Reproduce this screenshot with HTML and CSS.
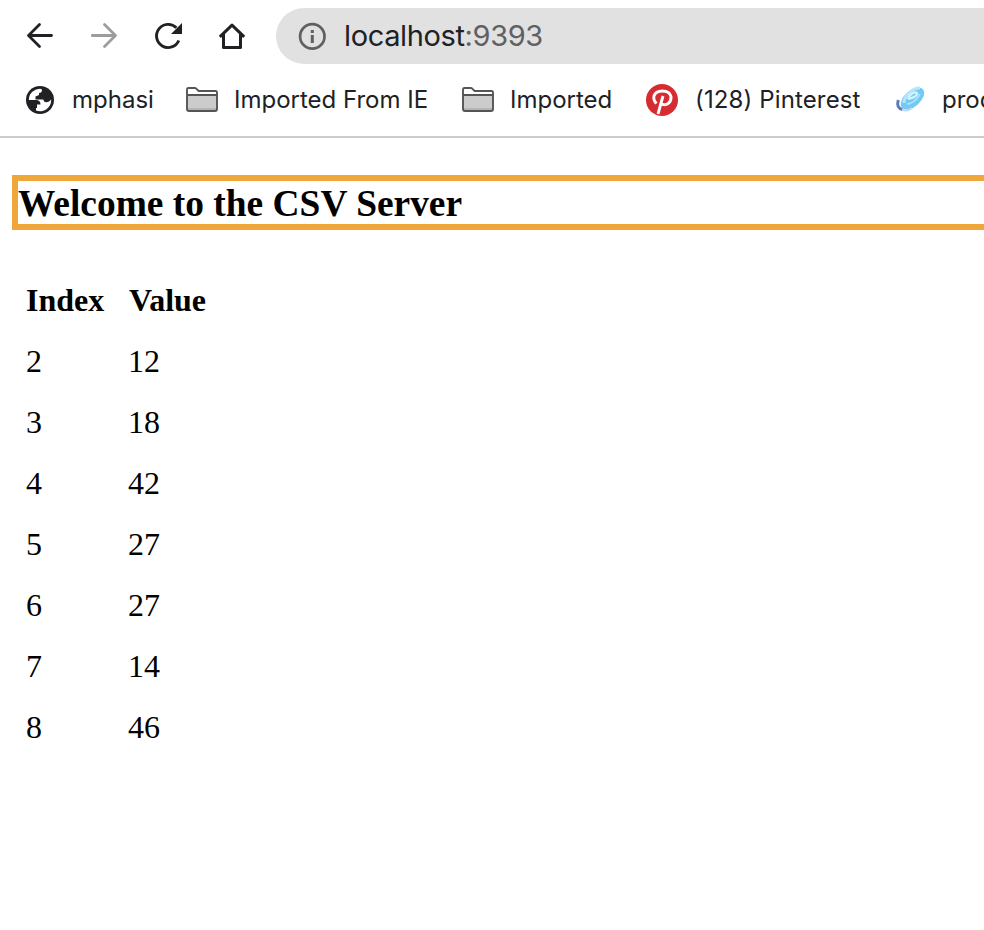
FILE: index.html
```html
<!DOCTYPE html>
<html lang="en">
<head>
<meta charset="utf-8">
<title>CSV Server</title>
<link rel="stylesheet" href="styles.css">
</head>
<body>
<header class="browser">
  <div class="toolbar">
    <svg class="nav" viewBox="0 0 32 32"><path d="M27.500 15.500H5M15.500 4.500 4.500 15.500 15.500 26.500" fill="none" stroke="#202124" stroke-width="2.800" stroke-linecap="round" stroke-linejoin="round"/></svg>
    <svg class="nav" viewBox="0 0 32 32"><path d="M4.300 15.500H27M16.500 4.500 27.500 15.500 16.500 26.500" fill="none" stroke="#9c9c9c" stroke-width="2.800" stroke-linecap="round" stroke-linejoin="round"/></svg>
    <svg class="nav" viewBox="0 0 32 32"><path d="M26.800 20.500A11.600 11.600 0 1 1 24.400 7.800" fill="none" stroke="#202124" stroke-width="2.900"/><path d="M30 3v11H19z" fill="#202124"/></svg>
    <svg class="nav" viewBox="0 0 32 32"><path d="M3.800 16.800 16 5.200 28.200 16.800M7.500 14V27.500H24.500V14" fill="none" stroke="#202124" stroke-width="3" stroke-linejoin="round"/></svg>
    <div class="address">
      <svg class="info" viewBox="0 0 28 28"><circle cx="14.300" cy="14.400" r="12.200" fill="none" stroke="#5f6064" stroke-width="2.700"/><path d="M12.800 13h3v8h-3zM12.800 8h3v2.900h-3z" fill="#5f6064"/></svg>
      <span class="host">localhost<span class="port">:9393</span></span>
    </div>
  </div>
  <nav class="bookmarks">
    <a class="bookmark globe">
      <svg class="icon" viewBox="0 0 32 32"><circle cx="16" cy="16" r="14" fill="#202124"/><path d="M17.500 4.900A11.200 11.200 0 0 0 4.800 16H12Q16.500 16 16.500 20.500H13V24H12V26.500A11.200 11.200 0 0 0 27.200 15.600Q25 18.500 22 18.200 19.500 18 19.300 15.500H11.500V12.500L15 11V9Q17.500 9 18 7z" fill="#fff"/></svg>
      <span>mphasi</span></a>
    <a class="bookmark folder-ie">
      <svg class="icon" viewBox="0 0 32 32"><path d="M1 25V5.500Q1 4 2.500 4H9q1 0 2 1.300L12.700 7H29.500Q31 7 31 8.500V25q0 2-2 2H3q-2 0-2-2z" fill="#fff"/><path d="M1 11H31V26H1z" fill="#ccc"/><path d="M2 24H30v2H2z" fill="#b5b5b5"/><path d="M1 11H31M1 25V5.500Q1 4 2.500 4H9q1 0 2 1.300L12.700 7H29.500Q31 7 31 8.500V25q0 2-2 2H3q-2 0-2-2z" fill="none" stroke="#555" stroke-width="1.900"/></svg>
      <span>Imported From IE</span></a>
    <a class="bookmark folder">
      <svg class="icon" viewBox="0 0 32 32"><path d="M1 25V5.500Q1 4 2.500 4H9q1 0 2 1.300L12.700 7H29.500Q31 7 31 8.500V25q0 2-2 2H3q-2 0-2-2z" fill="#fff"/><path d="M1 11H31V26H1z" fill="#ccc"/><path d="M2 24H30v2H2z" fill="#b5b5b5"/><path d="M1 11H31M1 25V5.500Q1 4 2.500 4H9q1 0 2 1.300L12.700 7H29.500Q31 7 31 8.500V25q0 2-2 2H3q-2 0-2-2z" fill="none" stroke="#555" stroke-width="1.900"/></svg>
      <span>Imported</span></a>
    <a class="bookmark pinterest">
      <svg class="icon" viewBox="0 0 32 32"><circle cx="16" cy="16" r="16" fill="#d62c31"/><path d="M10.500 19.500Q7 16 8 12C10 5.500 23 5 25 12.500 25.500 18.500 20.500 22.500 15.800 20M17 12 12 30" fill="none" stroke="#fff" stroke-width="2.900"/></svg>
      <span>(128) Pinterest</span></a>
    <a class="bookmark product">
      <svg class="icon" viewBox="0 0 32 32"><g fill="none"><ellipse cx="17.500" cy="14.500" rx="14" ry="8" transform="rotate(-42 17.500 14.500)" fill="#74c9f2"/><path d="M9 19C9 12 17 4 25 4" stroke="#b4e8fa" stroke-width="3"/><path d="M13 15C15 9 21 7 22 9.500 22 13 17 14 13 15" stroke="#d5f3fd" stroke-width="2.200"/><path d="M12 20Q19 20 25 10" stroke="#a9e2fa" stroke-width="1.800"/><path d="M3.300 16Q1 24 7.500 25.500" stroke="#587dbb" stroke-width="3"/><path d="M7 25.500Q12 28 17 24" stroke="#c4d5f2" stroke-width="2"/></g></svg>
      <span>products</span></a>
  </nav>
</header>
<main>
  <h3>Welcome to the CSV Server</h3>
  <table>
    <tr><th>Index</th><th>Value</th></tr>
    <tr><td>2</td><td>12</td></tr>
    <tr><td>3</td><td>18</td></tr>
    <tr><td>4</td><td>42</td></tr>
    <tr><td>5</td><td>27</td></tr>
    <tr><td>6</td><td>27</td></tr>
    <tr><td>7</td><td>14</td></tr>
    <tr><td>8</td><td>46</td></tr>
  </table>
</main>
</body>
</html>
```
FILE: styles.css
```css
* { box-sizing: border-box; }
body { margin: 0; height: 930px; background: #fff; overflow: hidden; font-family: "Liberation Serif", serif; color: #000; }
.browser { height: 138px; border-bottom: 2px solid #ccc; font-family: Inter, sans-serif; color: #202124; overflow: hidden; }
.toolbar { display: flex; height: 72px; padding: 8px 0 8px 24px; align-items: center; }
.nav { width: 32px; height: 32px; margin-right: 32px; flex: none; }
.address { flex: 1; height: 56px; margin-left: -4px; padding-left: 22px; display: flex; align-items: center; border-radius: 28px 0 0 28px; background: #e1e1e1; }
.info { width: 28px; height: 28px; margin-right: 18px; }
.host { font-size: 29px; line-height: 56px; letter-spacing: -.37px; white-space: nowrap; }
.port { color: #5f6064; }
.bookmarks { display: flex; height: 56px; padding-left: 24px; }
.bookmark { display: flex; flex: none; align-items: center; gap: 16px; font-size: 24px; line-height: 30px; white-space: nowrap; }
.icon { width: 32px; height: 32px; flex: none; }
.globe { width: 162px; }
.folder-ie { width: 276px; }
.folder { width: 184px; }
.pinterest { width: 249px; gap: 17px; letter-spacing: .13px; }
.product { gap: 15px; }
main { padding-left: 12px; }
h3 { margin: 37px 0 0; height: 55px; border: 6px solid #f0a73a; border-right: 0; font-size: 37.44px; line-height: 45px; }
table { margin: 40px 0 0 14px; border-spacing: 0; table-layout: fixed; width: 204px; font-size: 32px; line-height: 61px; }
th, td { padding: 0; height: 61px; width: 102px; text-align: left; }
th + th { padding-left: 1px; }
```
